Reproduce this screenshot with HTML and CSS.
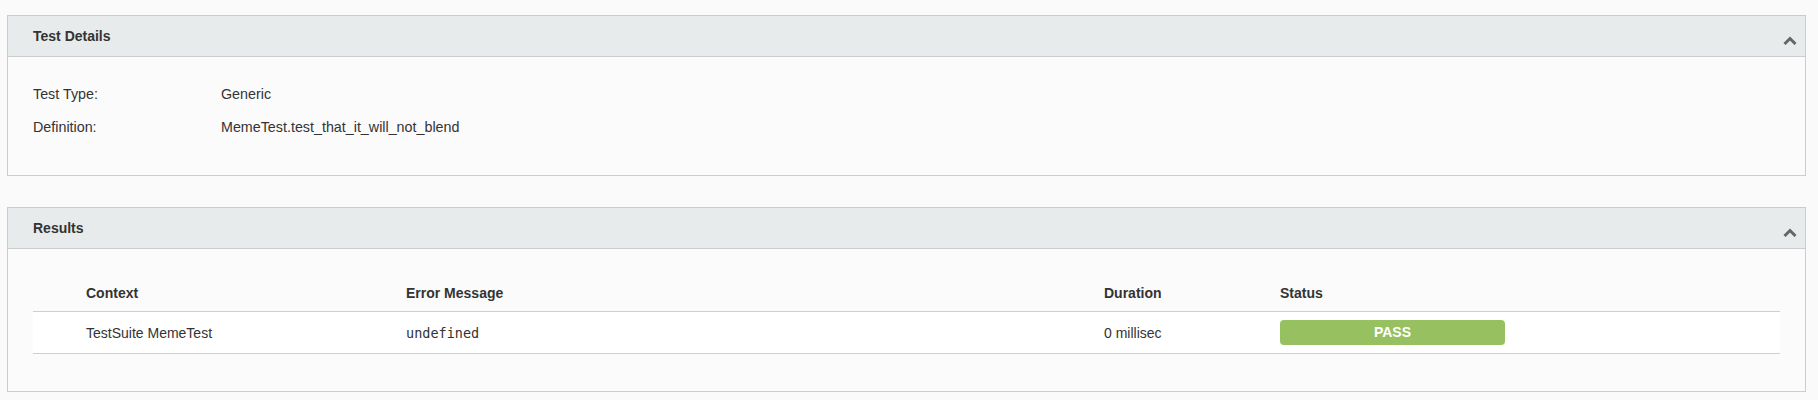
FILE: index.html
```html
<!DOCTYPE html>
<html lang="en">
<head>
  <meta charset="UTF-8">
  <title>Test Details</title>
  <link rel="stylesheet" href="styles.css">
</head>
<body>

  <!-- test details panel -->
  <div class="panel">
    <div class="panel-heading">
      <span class="panel-title">Test Details</span>
      <svg class="chevron" width="14" height="9" viewBox="0 0 14 9"><polyline points="1.5,8 7,2.5 12.5,8" /></svg>
    </div>
    <div class="panel-body details">
      <div class="detail-row">
        <span class="detail-label">Test Type:</span>
        <span>Generic</span>
      </div>
      <div class="detail-row">
        <span class="detail-label">Definition:</span>
        <span>MemeTest.test_that_it_will_not_blend</span>
      </div>
    </div>
  </div>

  <!-- results panel -->
  <div class="panel">
    <div class="panel-heading">
      <span class="panel-title">Results</span>
      <svg class="chevron" width="14" height="9" viewBox="0 0 14 9"><polyline points="1.5,8 7,2.5 12.5,8" /></svg>
    </div>
    <div class="panel-body results">
      <table class="results-table">
        <colgroup>
          <col class="col-spacer">
          <col class="col-context">
          <col class="col-error">
          <col class="col-duration">
          <col class="col-status">
          <col>
        </colgroup>
        <thead>
          <tr>
            <th></th>
            <th>Context</th>
            <th>Error Message</th>
            <th>Duration</th>
            <th>Status</th>
            <th></th>
          </tr>
        </thead>
        <tbody>
          <tr>
            <td></td>
            <td>TestSuite MemeTest</td>
            <td><code>undefined</code></td>
            <td>0 millisec</td>
            <td><div class="badge pass">PASS</div></td>
            <td></td>
          </tr>
        </tbody>
      </table>
    </div>
  </div>

</body>
</html>
```

FILE: styles.css
```css
body {
  font-family: 'Liberation Sans', Arial, sans-serif;
  font-size: 14px;
  line-height: 20px;
  color: #333;
  background-color: #fafafa;
  margin: 0;
  padding: 15px 12px 0 7px;
}

.panel {
  border: 1px solid #ccc;
  background-color: #fbfbfb;
}

.panel + .panel {
  margin-top: 31px;
}

.panel-heading {
  height: 40px;
  background-color: #e8ebec;
  border-bottom: 1px solid #ccc;
  display: flex;
  justify-content: space-between;
  align-items: center;
  padding: 0 8px 0 25px;
}

.panel-title {
  font-weight: bold;
}

.chevron {
  margin-top: 8px;
}

.chevron polyline {
  fill: none;
  stroke: #666;
  stroke-width: 3;
}

.panel-body {
  padding: 0 25px;
}

.details {
  padding-top: 20px;
  padding-bottom: 32px;
  font-size: 14.3px;
}

.detail-row {
  display: grid;
  grid-template-columns: 188px 1fr;
  align-items: center;
  height: 33px;
}

.results {
  padding-top: 26px;
  padding-bottom: 37px;
}

.results-table {
  width: 100%;
  border-collapse: collapse;
  table-layout: fixed;
}

.col-spacer {
  width: 45px;
}

.col-context {
  width: 320px;
}

.col-error {
  width: 698px;
}

.col-duration {
  width: 176px;
}

.col-status {
  width: 241px;
}

.results-table th {
  text-align: left;
  font-weight: bold;
  padding: 8px;
  vertical-align: bottom;
  border-bottom: 1px solid #cfcfcf;
}

.results-table td {
  padding: 8px;
  vertical-align: middle;
  background-color: #fff;
  border-bottom: 1px solid #cfcfcf;
}

.results-table th:first-child,
.results-table td:first-child {
  padding: 0;
}

code {
  font-family: 'DejaVu Sans Mono', monospace;
  font-size: 13.5px;
  color: #333;
}

.badge {
  height: 25px;
  line-height: 25px;
  border-radius: 4px;
  text-align: center;
  color: #fff;
  font-weight: bold;
  font-size: 14px;
}

.pass {
  background-color: #97c160;
}
```
